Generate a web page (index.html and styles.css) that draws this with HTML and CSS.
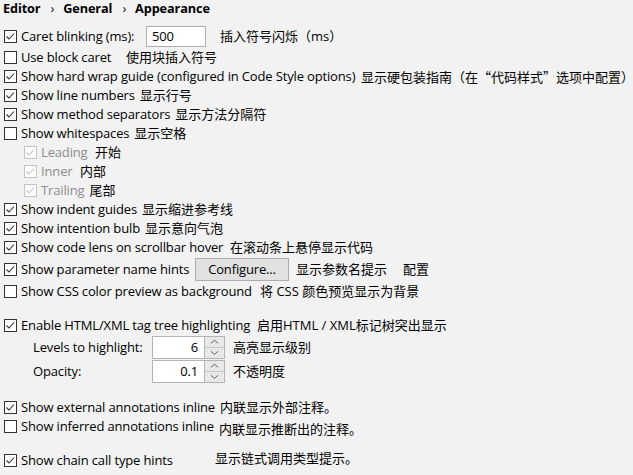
FILE: index.html
```html
<!DOCTYPE html>
<html lang="zh">
<head>
<meta charset="utf-8">
<title>Editor › General › Appearance</title>
<link rel="stylesheet" href="styles.css">
</head>
<body>
<div class="page">
  <div class="crumbs"><span>Editor</span><span class="sep">›</span><span>General</span><span class="sep">›</span><span>Appearance</span></div>

  <div class="row row-field">
    <span class="cb on"><svg viewBox="0 0 13 13"><polyline points="2.5,6.5 5,9 10,3.5"/></svg></span>
    <span class="lbl w125">Caret blinking (ms):</span>
    <span class="field">500</span>
    <span class="zh g14">插入符号闪烁（ms）</span>
  </div>
  <div class="row">
    <span class="cb"></span><span class="lbl w105">Use block caret</span><span class="zh">使用块插入符号</span>
  </div>
  <div class="row">
    <span class="cb on"><svg viewBox="0 0 13 13"><polyline points="2.5,6.5 5,9 10,3.5"/></svg></span><span class="lbl w340">Show hard wrap guide (configured in Code Style options)</span><span class="zh">显示硬包装指南（在<span class="cjk">“</span>代码样式<span class="cjk">”</span>选项中配置）</span>
  </div>
  <div class="row">
    <span class="cb on"><svg viewBox="0 0 13 13"><polyline points="2.5,6.5 5,9 10,3.5"/></svg></span><span class="lbl w118">Show line numbers</span><span class="zh">显示行号</span>
  </div>
  <div class="row">
    <span class="cb on"><svg viewBox="0 0 13 13"><polyline points="2.5,6.5 5,9 10,3.5"/></svg></span><span class="lbl w151">Show method separators</span><span class="zh">显示方法分隔符</span>
  </div>
  <div class="row">
    <span class="cb"></span><span class="lbl w113">Show whitespaces</span><span class="zh">显示空格</span>
  </div>
  <div class="row sub">
    <span class="cb on dis"><svg viewBox="0 0 13 13"><polyline points="2.5,6.5 5,9 10,3.5"/></svg></span><span class="lbl dim w54">Leading</span><span class="zh">开始</span>
  </div>
  <div class="row sub">
    <span class="cb on dis"><svg viewBox="0 0 13 13"><polyline points="2.5,6.5 5,9 10,3.5"/></svg></span><span class="lbl dim w39">Inner</span><span class="zh">内部</span>
  </div>
  <div class="row sub">
    <span class="cb on dis"><svg viewBox="0 0 13 13"><polyline points="2.5,6.5 5,9 10,3.5"/></svg></span><span class="lbl dim w48">Trailing</span><span class="zh">尾部</span>
  </div>
  <div class="row">
    <span class="cb on"><svg viewBox="0 0 13 13"><polyline points="2.5,6.5 5,9 10,3.5"/></svg></span><span class="lbl w121">Show indent guides</span><span class="zh">显示缩进参考线</span>
  </div>
  <div class="row">
    <span class="cb on"><svg viewBox="0 0 13 13"><polyline points="2.5,6.5 5,9 10,3.5"/></svg></span><span class="lbl w124">Show intention bulb</span><span class="zh">显示意向气泡</span>
  </div>
  <div class="row">
    <span class="cb on"><svg viewBox="0 0 13 13"><polyline points="2.5,6.5 5,9 10,3.5"/></svg></span><span class="lbl w209">Show code lens on scrollbar hover</span><span class="zh">在滚动条上悬停显示代码</span>
  </div>
  <div class="row row-btn">
    <span class="cb on"><svg viewBox="0 0 13 13"><polyline points="2.5,6.5 5,9 10,3.5"/></svg></span><span class="lbl w174">Show parameter name hints</span>
    <span class="btn">Configure...</span>
    <span class="zh g7">显示参数名提示</span><span class="zh g16">配置</span>
  </div>
  <div class="row">
    <span class="cb"></span><span class="lbl w239">Show CSS color preview as background</span><span class="zh">将 CSS 颜色预览显示为背景</span>
  </div>

  <div class="spacer"></div>

  <div class="row">
    <span class="cb on"><svg viewBox="0 0 13 13"><polyline points="2.5,6.5 5,9 10,3.5"/></svg></span><span class="lbl w236">Enable HTML/XML tag tree highlighting</span><span class="zh">启用HTML / XML标记树突出显示</span>
  </div>
  <div class="row row-spin">
    <span class="plabel">Levels to highlight:</span>
    <span class="spin"><span class="spin-val">6</span><span class="spin-btns"><span class="sb"><svg viewBox="0 0 19 11"><polyline points="5.5,7 9.5,3.5 13.5,7"/></svg></span><span class="sb"><svg viewBox="0 0 19 11"><polyline points="5.5,3.5 9.5,7 13.5,3.5"/></svg></span></span></span>
    <span class="zh g8">高亮显示级别</span>
  </div>
  <div class="row row-spin">
    <span class="plabel">Opacity:</span>
    <span class="spin"><span class="spin-val">0.1</span><span class="spin-btns"><span class="sb"><svg viewBox="0 0 19 11"><polyline points="5.5,7 9.5,3.5 13.5,7"/></svg></span><span class="sb"><svg viewBox="0 0 19 11"><polyline points="5.5,3.5 9.5,7 13.5,3.5"/></svg></span></span></span>
    <span class="zh g8">不透明度</span>
  </div>

  <div class="spacer"></div>

  <div class="row">
    <span class="cb on"><svg viewBox="0 0 13 13"><polyline points="2.5,6.5 5,9 10,3.5"/></svg></span><span class="lbl w194">Show external annotations inline</span><span class="zh">内联显示外部注释。</span>
  </div>
  <div class="row">
    <span class="cb"></span><span class="lbl w192">Show inferred annotations inline</span><span class="zh low">内联显示推断出的注释。</span>
  </div>

  <div class="spacer"></div>

  <div class="row">
    <span class="cb on"><svg viewBox="0 0 13 13"><polyline points="2.5,6.5 5,9 10,3.5"/></svg></span><span class="lbl w194">Show chain call type hints</span><span class="zh high">显示链式调用类型提示。</span>
  </div>
</div>
</body>
</html>
```

FILE: styles.css
```css
html, body {
  margin: 0;
  padding: 0;
  background: #f2f2f2;
}

body {
  font-family: "Open Sans", "Noto Sans CJK SC", sans-serif;
  font-size: 13px;
  color: #000;
  width: 633px;
  height: 475px;
  overflow: hidden;
}

.page {
  padding-left: 4px;
}

.crumbs {
  display: flex;
  align-items: center;
  height: 17px;
  margin-left: -1px;
  margin-bottom: 8px;
  font-weight: 700;
  font-size: 12.7px;
  letter-spacing: -0.1px;
  line-height: 17px;
  white-space: nowrap;
}

.crumbs .sep {
  font-weight: 400;
  margin: 0 9px 0 10px;
}

.row {
  display: flex;
  align-items: center;
  height: 19px;
  white-space: nowrap;
  line-height: 17px;
}

.row-field { height: 23px; }
.row-btn { height: 25px; }
.row-spin { height: 24px; }

.sub { padding-left: 20px; }

.lbl,
.plabel,
.btn,
.spin-val,
.field {
  font-size: 13px;
  letter-spacing: -0.15px;
}

.lbl {
  flex: none;
  box-sizing: border-box;
  padding-right: 5px;
}

.w39 { min-width: 39px; }
.w48 { min-width: 48px; }
.w54 { min-width: 54px; }
.w105 { min-width: 105px; }
.w113 { min-width: 113px; }
.w118 { min-width: 118px; }
.w121 { min-width: 121px; }
.w124 { min-width: 124px; }
.w125 { min-width: 125px; }
.w151 { min-width: 151px; }
.w174 { min-width: 174px; }
.w192 { min-width: 192px; }
.w194 { min-width: 194px; }
.w209 { min-width: 209px; }
.w236 { min-width: 236px; }
.w239 { min-width: 239px; }
.w340 { min-width: 340px; }

.cb {
  flex: none;
  width: 13px;
  height: 13px;
  box-sizing: border-box;
  border: 1px solid #333;
  background: #fff;
  margin-right: 4px;
  position: relative;
}

.cb svg {
  position: absolute;
  left: -1px;
  top: -1px;
  width: 13px;
  height: 13px;
}

.cb svg polyline {
  fill: none;
  stroke: #333;
  stroke-width: 1.1;
}

.cb.dis {
  border-color: #c4c4c4;
}

.cb.dis svg polyline {
  stroke: #c4c4c4;
}

.dim { color: #8c8c8c; }

.cjk { font-family: "Noto Sans CJK SC", sans-serif; }

.g7 { margin-left: 7px; }
.g8 { margin-left: 8px; }
.g14 { margin-left: 14px; }
.g16 { margin-left: 16px; }

.low { position: relative; top: 3px; }
.high { position: relative; top: -2px; }

.field {
  flex: none;
  width: 60px;
  height: 21px;
  box-sizing: border-box;
  border: 1px solid #adadad;
  background: #fff;
  padding-left: 5px;
  line-height: 19px;
}

.btn {
  flex: none;
  width: 94px;
  height: 23px;
  box-sizing: border-box;
  border: 1px solid #adadad;
  background: #e1e1e1;
  text-align: center;
  line-height: 21px;
}

.spacer { height: 15px; }

.plabel {
  flex: none;
  margin-left: 29px;
  width: 119px;
}

.spin {
  flex: none;
  display: flex;
  width: 73px;
  height: 23px;
  box-sizing: border-box;
  border: 1px solid #b4b4b4;
  background: #fff;
}

.spin-val {
  flex: 1;
  text-align: right;
  padding-right: 6px;
  line-height: 21px;
}

.spin-btns {
  flex: none;
  width: 19px;
  display: flex;
  flex-direction: column;
  border-left: 1px solid #b4b4b4;
}

.sb {
  flex: 1;
  background: #e8e8e8;
  display: flex;
}

.sb + .sb {
  border-top: 1px solid #c8c8c8;
}

.sb svg {
  width: 19px;
  height: 10px;
}

.sb svg polyline {
  fill: none;
  stroke: #555;
  stroke-width: 1;
}
```
